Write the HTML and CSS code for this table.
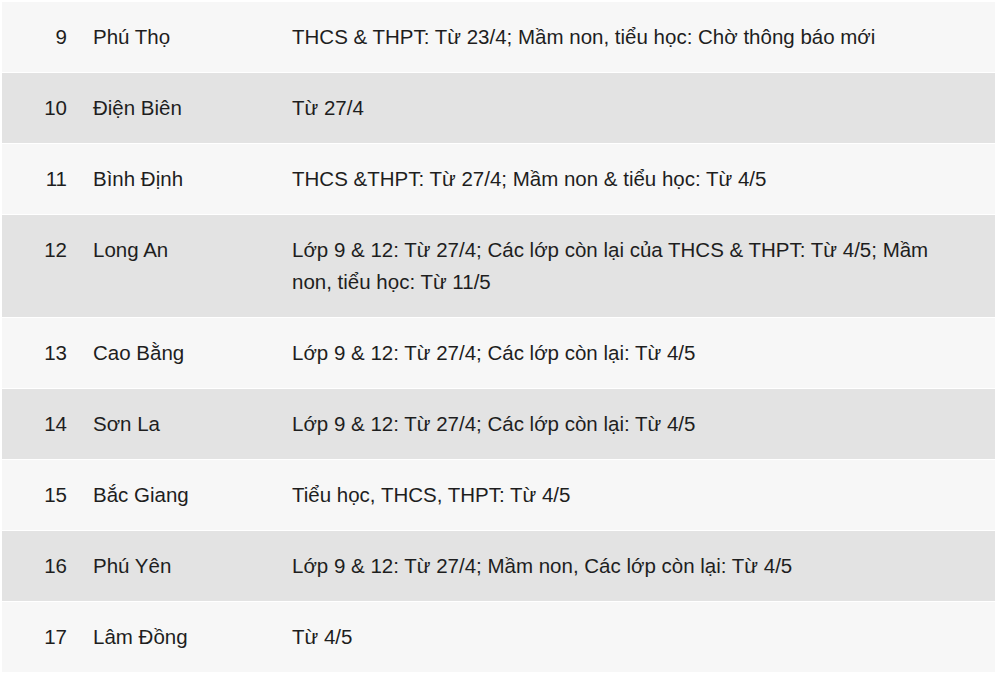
FILE: index.html
```html
<!DOCTYPE html>
<html lang="vi">
<head>
<meta charset="utf-8">
<link rel="stylesheet" href="styles.css">
</head>
<body>
<div class="wrap">
<table class="sched">
<tbody>
<tr class="odd"><td class="num">9</td><td class="name">Phú Thọ</td><td class="info">THCS &amp; THPT: Từ 23/4; Mầm non, tiểu học: Chờ thông báo mới</td></tr>
<tr class="even"><td class="num">10</td><td class="name">Điện Biên</td><td class="info">Từ 27/4</td></tr>
<tr class="odd"><td class="num">11</td><td class="name">Bình Định</td><td class="info">THCS &amp;THPT: Từ 27/4; Mầm non &amp; tiểu học: Từ 4/5</td></tr>
<tr class="even"><td class="num">12</td><td class="name">Long An</td><td class="info">Lớp 9 &amp; 12: Từ 27/4; Các lớp còn lại của THCS &amp; THPT: Từ 4/5; Mầm non, tiểu học: Từ 11/5</td></tr>
<tr class="odd"><td class="num">13</td><td class="name">Cao Bằng</td><td class="info">Lớp 9 &amp; 12: Từ 27/4; Các lớp còn lại: Từ 4/5</td></tr>
<tr class="even"><td class="num">14</td><td class="name">Sơn La</td><td class="info">Lớp 9 &amp; 12: Từ 27/4; Các lớp còn lại: Từ 4/5</td></tr>
<tr class="odd"><td class="num">15</td><td class="name">Bắc Giang</td><td class="info">Tiểu học, THCS, THPT: Từ 4/5</td></tr>
<tr class="even"><td class="num">16</td><td class="name">Phú Yên</td><td class="info">Lớp 9 &amp; 12: Từ 27/4; Mầm non, Các lớp còn lại: Từ 4/5</td></tr>
<tr class="odd"><td class="num">17</td><td class="name">Lâm Đồng</td><td class="info">Từ 4/5</td></tr>
</tbody>
</table>
</div>
</body>
</html>
```
FILE: styles.css
```css
html, body {
  margin: 0;
  padding: 0;
  background: #ffffff;
}
.wrap {
  padding: 2px 5px 0 2px;
}
.sched {
  width: 100%;
  border-collapse: collapse;
  table-layout: fixed;
  font-family: "Liberation Sans", Arial, sans-serif;
  font-size: 20.5px;
  line-height: 32px;
  color: #1e1e1e;
}
.sched td {
  padding: 19px 0 19px 13px;
  border-bottom: 1px solid #ffffff;
  vertical-align: top;
}
.sched tr.odd td { background: #f7f7f7; }
.sched tr.even td { background: #e3e3e3; }
.sched td.num {
  width: 65px;
  text-align: right;
  padding-left: 0;
}
.sched td.name {
  width: 186px;
  padding-left: 26px;
}
.sched td.info {
  padding-right: 40px;
}
```
